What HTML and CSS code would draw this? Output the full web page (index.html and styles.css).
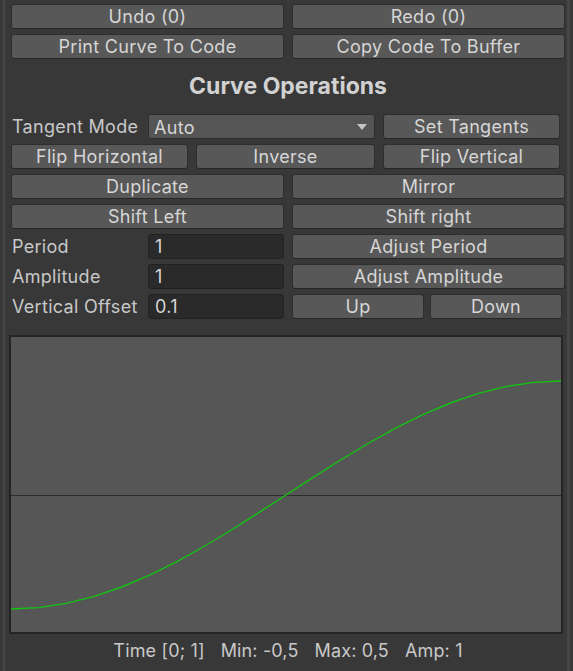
FILE: index.html
```html
<!DOCTYPE html>
<html>
<head>
<meta charset="utf-8">
<link rel="stylesheet" href="styles.css">
</head>
<body>
<div class="panel">
  <div class="content">
    <div class="row two">
      <button class="btn">Undo (0)</button>
      <button class="btn">Redo (0)</button>
    </div>
    <div class="row two">
      <button class="btn">Print Curve To Code</button>
      <button class="btn">Copy Code To Buffer</button>
    </div>
    <div class="heading">Curve Operations</div>
    <div class="row tangent">
      <div class="label">Tangent Mode</div>
      <div class="dropdown"><span>Auto</span><span class="arrow"></span></div>
      <button class="btn">Set Tangents</button>
    </div>
    <div class="row three">
      <button class="btn">Flip Horizontal</button>
      <button class="btn">Inverse</button>
      <button class="btn">Flip Vertical</button>
    </div>
    <div class="row two">
      <button class="btn">Duplicate</button>
      <button class="btn">Mirror</button>
    </div>
    <div class="row two">
      <button class="btn">Shift Left</button>
      <button class="btn">Shift right</button>
    </div>
    <div class="row field-row">
      <div class="label">Period</div>
      <div class="field">1</div>
      <button class="btn">Adjust Period</button>
    </div>
    <div class="row field-row">
      <div class="label">Amplitude</div>
      <div class="field">1</div>
      <button class="btn">Adjust Amplitude</button>
    </div>
    <div class="row field-row">
      <div class="label">Vertical Offset</div>
      <div class="field">0.1</div>
      <div class="pair">
        <button class="btn">Up</button>
        <button class="btn">Down</button>
      </div>
    </div>
    <div class="graph">
      <svg width="550" height="295" viewBox="0 0 550 295">
        <line x1="0" y1="158.5" x2="550" y2="158.5" stroke="#2c2c2c" stroke-width="1"/>
        <polyline fill="none" stroke="#12c412" stroke-width="1.4" points="0,272 27.5,270.6 55,266.42 82.5,259.58 110,250.23 137.5,238.61 165,225.01 192.5,209.75 220,193.23 247.5,175.83 275,158 302.5,140.17 330,122.77 357.5,106.25 385,90.99 412.5,77.39 440,65.77 467.5,56.42 495,49.58 522.5,45.4 550,44"/>
      </svg>
    </div>
    <div class="footer">
      <span>Time [0; 1]</span>
      <span>Min: -0,5</span>
      <span>Max: 0,5</span>
      <span>Amp: 1</span>
    </div>
  </div>
</div>
</body>
</html>
```

FILE: styles.css
```css
* { box-sizing: border-box; }
html, body {
  margin: 0;
  padding: 0;
  background: #383838;
}
body {
  font-family: Inter, "Noto Sans", sans-serif;
  font-size: 18px;
  letter-spacing: 0.3px;
  color: #c8c8c8;
  overflow: hidden;
}
.panel {
  margin: 0 3px;
  height: 671px;
  border-left: 2px solid #464646;
  border-right: 3px solid #464646;
}
.content {
  padding: 4px 2px 0 6px;
  display: flex;
  flex-direction: column;
  gap: 5px;
}
.row {
  display: grid;
  height: 25px;
  column-gap: 8px;
}
.two { grid-template-columns: 273px 273px; }
.three { grid-template-columns: 177px 179px 177px; }
.tangent { grid-template-columns: 129px 227px 177px; }
.field-row { grid-template-columns: 129px 136px 273px; }
.pair {
  display: grid;
  grid-template-columns: 132px 132px;
  column-gap: 6px;
}
.btn {
  font: inherit;
  letter-spacing: inherit;
  color: #d6d6d6;
  background: #585858;
  border: 1px solid #2e2e2e;
  border-bottom-color: #262626;
  border-radius: 3px;
  padding: 1px 0 0 0;
  margin: 0;
  height: 25px;
  line-height: 22px;
  text-align: center;
  white-space: nowrap;
}
.label {
  padding-left: 1px;
  padding-top: 1px;
  line-height: 24px;
  white-space: nowrap;
  color: #c8c8c8;
}
.dropdown {
  display: flex;
  align-items: center;
  justify-content: space-between;
  background: #555555;
  border: 1px solid #2e2e2e;
  border-radius: 3px;
  padding: 1px 7px 0 5px;
  color: #d6d6d6;
}
.arrow {
  width: 0;
  height: 0;
  border-left: 5px solid transparent;
  border-right: 5px solid transparent;
  border-top: 6px solid #c4c4c4;
  margin-top: -1px;
}
.field {
  background: #2a2a2a;
  border: 1px solid #212121;
  border-radius: 3px;
  padding: 1px 0 0 6px;
  line-height: 22px;
  color: #d6d6d6;
}
.heading {
  height: 45px;
  line-height: 45px;
  text-align: center;
  font-weight: 700;
  font-size: 23px;
  letter-spacing: 0;
  color: #d2d2d2;
}
.graph {
  margin-top: 11px;
  margin-left: -2px;
  width: 554px;
  height: 299px;
  border: 2px solid #242424;
  background: #565656;
}
.graph svg { display: block; }
.footer {
  height: 22px;
  padding-top: 1px;
  line-height: 21px;
  display: flex;
  justify-content: center;
  gap: 16px;
  letter-spacing: 0.15px;
  color: #c8c8c8;
  white-space: nowrap;
}
```
